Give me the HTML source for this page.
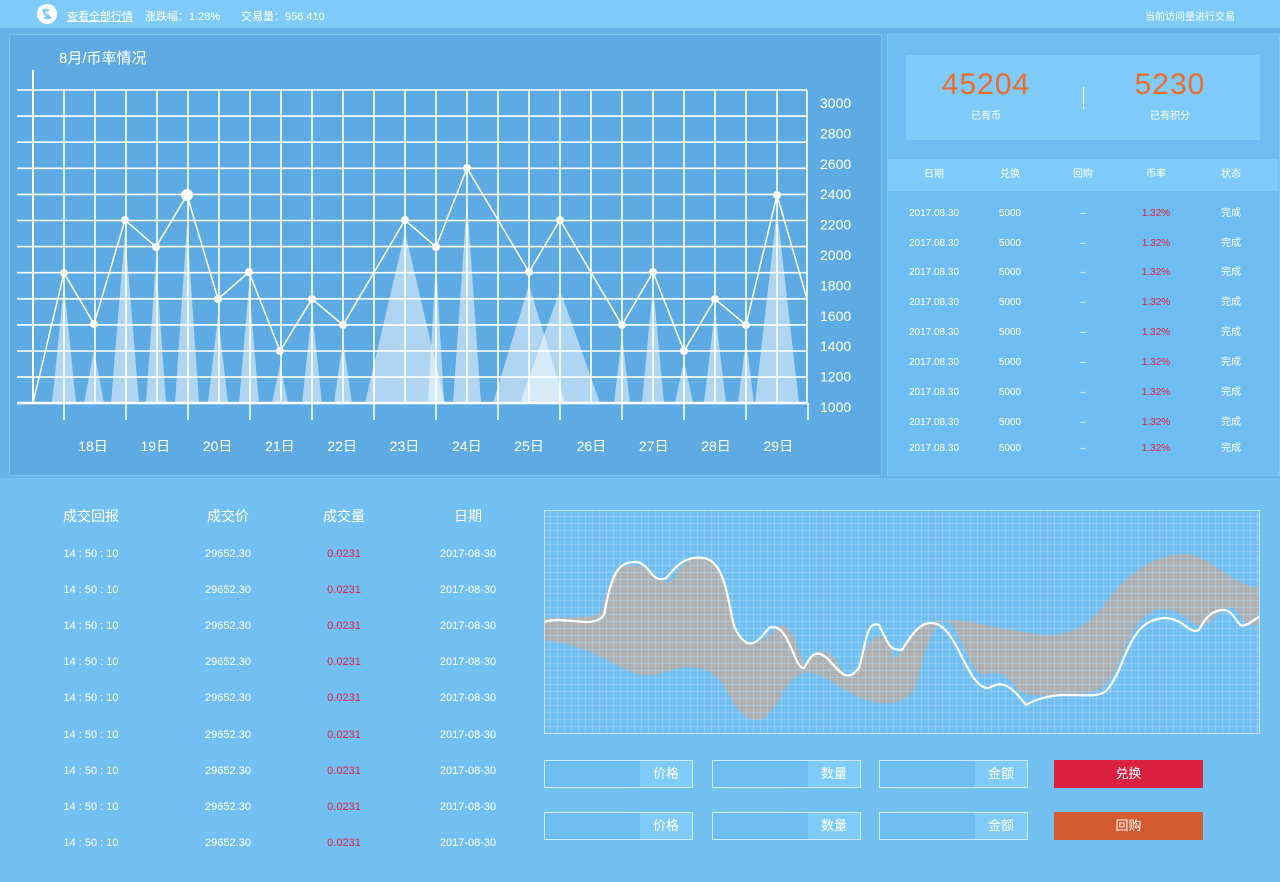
<!DOCTYPE html>
<html><head><meta charset="utf-8"><style>
*{margin:0;padding:0;box-sizing:border-box}
body{width:1280px;height:882px;overflow:hidden;background:#72bff2;font-family:"Liberation Sans","Noto Sans CJK SC",sans-serif;color:#fff;position:relative}
.abs{position:absolute}
.top{left:0;top:0;width:1280px;height:28px;background:#7ecbf9;font-size:11px}
.t{position:absolute;white-space:nowrap}
.c{transform:translateX(-50%)}
.r{line-height:12px;height:12px}
</style></head><body>
<div class="abs top">
 <svg class="t" style="left:37px;top:4px" width="20" height="20" viewBox="0 0 20 20"><circle cx="10" cy="10" r="10" fill="#fff"/><path d="M5 6 Q10 3 14 7 Q10 6 8 9 Q12 10 15 14 Q10 17 6 14 Q9 13 9 12 Q6 11 5 6Z" fill="#7ecbf9"/></svg>
 <span class="t" style="left:67px;top:8px;text-decoration:underline">查看全部行情</span>
 <span class="t" style="left:145px;top:8px">涨跌幅：1.28%</span>
 <span class="t" style="left:241px;top:8px">交易量：956.410</span>
 <span class="t" style="left:1145px;top:8px;font-size:10px">当前访问量进行交易</span>
</div>
<div class="abs" style="left:0;top:28px;width:1280px;height:450px;background:#66b3ea"></div>
<div class="abs" style="left:9px;top:34px;width:873px;height:442px;background:#5eaae3;border:1px solid #7dc0ee"></div>
<div class="abs" style="left:887px;top:34px;width:393px;height:442px;background:#6ebdf2;border:1px solid #80c6f3"></div>
<span class="t" style="left:59px;top:47px;font-size:15px">8月/币率情况</span>
<svg class="abs" style="left:0;top:0" width="882" height="480" id="main"></svg>
<div class="abs" style="left:906px;top:55px;width:354px;height:85px;background:#7ecbf9"></div>
<span class="t c" style="left:986px;top:68px;font-size:30px;color:#f06a2a;letter-spacing:1px">45204</span>
<span class="t c" style="left:986px;top:107px;font-size:10px">已有币</span>
<div class="abs" style="left:1083px;top:87px;width:1px;height:22px;background:#fff"></div>
<span class="t c" style="left:1170px;top:68px;font-size:30px;color:#f06a2a;letter-spacing:1px">5230</span>
<span class="t c" style="left:1170px;top:107px;font-size:10px">已有积分</span>
<div class="abs" style="left:888px;top:159px;width:390px;height:32px;background:#7ecbf9"></div>
<div id="rt"></div>
<div id="lt"></div>
<svg class="abs" style="left:544px;top:510px" width="716" height="224" id="wave"></svg>
<div id="form"></div>
<script>
var s='';
var xs=[];for(var i=0;i<26;i++)xs.push(33+i*31);xs[25]=807;
for(var i=0;i<13;i++){var y=90+i*26.1;s+='<line x1="17" y1="'+y+'" x2="807" y2="'+y+'" stroke="#fff" stroke-width="1.6"/>';}
for(var i=1;i<26;i++)s+='<line x1="'+xs[i]+'" y1="90" x2="'+xs[i]+'" y2="403" stroke="#fff" stroke-width="1.6"/>';
s+='<line x1="33" y1="70" x2="33" y2="404" stroke="#fff" stroke-width="2"/><line x1="17" y1="403" x2="807" y2="403" stroke="#fff" stroke-width="2.5"/>';
for(var i=0;i<13;i++){var x=64+i*62;s+='<line x1="'+x+'" y1="403" x2="'+x+'" y2="420" stroke="#fff" stroke-width="1.5"/>';}
var tri=[[64,285,12],[94,350,10],[125,232,14],[156,260,10],[187,225,12],[218,315,10],[249,285,10],[280,365,8],[312,310,10],[343,340,9],[405,232,40],[436,260,8],[467,200,14],[529,285,36],[560,290,40],[622,335,8],[653,285,11],[684,360,9],[715,310,11],[746,340,8],[777,210,22]];
tri.forEach(function(t){s+='<polygon points="'+(t[0]-t[2])+',403 '+t[0]+','+t[1]+' '+(t[0]+t[2])+',403" fill="#fff" fill-opacity="0.5"/>';});
var pts=[[33,403],[64,273],[94,324],[125,220],[156,247],[187,195],[218,299],[249,272],[280,351],[312,299],[343,325],[405,220],[436,247],[467,168],[529,272],[560,220],[622,325],[653,272],[684,351],[715,299],[746,325],[777,195],[807,299]];
s+='<polyline fill="none" stroke="#fff" stroke-width="1.5" points="'+pts.map(function(p){return p.join(',')}).join(' ')+'"/>';
pts.slice(1).forEach(function(p){var r=(p[0]==187)?6:(p[0]==807?0:4);s+='<circle cx="'+p[0]+'" cy="'+p[1]+'" r="'+r+'" fill="#fff"/>';});
var yl=[3000,2800,2600,2400,2200,2000,1800,1600,1400,1200,1000];
yl.forEach(function(v,i){s+='<text x="820" y="'+(108+i*30.4)+'" fill="#fff" font-size="14" font-family="Liberation Sans">'+v+'</text>';});
for(var d=18;d<=29;d++){var x=93+(d-18)*62.3;s+='<text x="'+x+'" y="451" fill="#fff" font-size="14" text-anchor="middle" font-family="Liberation Sans,Noto Sans CJK SC">'+d+'日</text>';}
document.getElementById('main').innerHTML=s;
var h='',hx=[934,1010,1083,1156,1231],hd=['日期','兑换','回购','币率','状态'];
hd.forEach(function(t,i){h+='<span class="t c r" style="left:'+hx[i]+'px;top:169px;font-size:10px">'+t+'</span>';});
[214,244,273,303,333,363,393,423,449].forEach(function(y){var v=['2017.08.30','5000','–','1.32%','完成'];v.forEach(function(t,i){h+='<span class="t c r" style="left:'+hx[i]+'px;top:'+(y-6)+'px;font-size:10px;'+(i==3?'color:#e0213f':'')+'">'+t+'</span>';});});
document.getElementById('rt').innerHTML=h;
h='';var lx=[91,228,344,468];['成交回报','成交价','成交量','日期'].forEach(function(t,i){h+='<span class="t c" style="left:'+lx[i]+'px;top:507px;font-size:14px;line-height:18px">'+t+'</span>';});
for(var r=0;r<9;r++){var y=548+r*36.1;['14 : 50 : 10','29652.30','0.0231','2017-08-30'].forEach(function(t,i){h+='<span class="t c" style="left:'+lx[i]+'px;top:'+y+'px;font-size:11px;line-height:13px;'+(i==2?'color:#e0213f':'')+'">'+t+'</span>';});}
document.getElementById('lt').innerHTML=h;
var w='<defs><pattern id="g" width="7" height="7" patternUnits="userSpaceOnUse"><path d="M7 0V7H0" fill="none" stroke="#a9d7f7" stroke-width="1"/></pattern></defs>';
w+='<rect width="716" height="224" fill="#72bff2"/>';
var band='M0 108 C30 106 50 110 58 100 C66 60 80 52 96 56 C110 62 116 80 130 68 C140 50 150 45 165 50 C185 55 185 110 192 120 C205 145 220 130 235 116 C250 110 255 150 262 155 C270 140 280 135 292 150 C300 165 305 170 315 158 C322 130 335 115 345 136 C350 135 345 160 358 140 C370 120 385 110 400 110 C420 108 450 118 480 122 C520 130 540 120 560 95 C590 55 620 40 650 45 C675 55 690 75 716 78 L716 113 C705 120 700 112 692 100 C680 90 668 115 660 115 C650 120 640 100 625 100 C600 95 590 120 580 140 C565 180 555 183 530 184 C500 184 480 190 470 175 C462 165 455 160 440 165 C425 165 415 110 400 110 C390 115 380 140 375 165 C370 195 345 195 330 192 C300 185 280 160 260 163 C240 165 235 205 215 210 C190 212 185 175 170 165 C150 150 130 160 110 165 C85 168 70 150 40 140 C20 132 10 132 0 130Z';
w+='<path d="'+band+'" fill="#b0b0b0"/>';
w+='<rect width="716" height="224" fill="url(#g)"/>';
var line='M0 112 C20 105 50 120 60 105 C68 60 75 52 92 52 C105 52 108 75 122 68 C130 60 138 45 160 48 C185 52 185 110 192 120 C205 145 215 130 225 118 C245 110 250 160 260 158 C265 150 270 135 285 150 C300 168 305 170 315 158 C322 135 322 110 335 115 C345 135 345 140 358 140 C370 120 380 108 395 115 C415 125 425 180 445 178 C460 168 470 180 482 195 C490 190 505 185 520 185 C560 185 560 190 575 160 C590 120 600 110 620 108 C640 108 645 125 655 120 C665 100 675 100 680 100 C690 100 695 120 700 115 C705 116 710 108 716 107';
w+='<path d="'+line+'" fill="none" stroke="#fff" stroke-width="2.2"/>';
w+='<rect x="0.5" y="0.5" width="715" height="223" fill="none" stroke="#bfe2fa"/>';
document.getElementById('wave').innerHTML=w;
h='';var fx=[544,712,879],lb=['价格','数量','金额'];
[760,812].forEach(function(y,r){fx.forEach(function(x,i){h+='<div class="abs" style="left:'+x+'px;top:'+y+'px;width:149px;height:28px;border:1px solid #cfeafc;background:#6ebdf2"><div class="abs" style="right:0;top:0;width:52px;height:26px;background:#7ecbf9;text-align:center;font-size:13px;line-height:26px">'+lb[i]+'</div></div>';});
h+='<div class="abs" style="left:1054px;top:'+y+'px;width:149px;height:28px;background:'+(r?'#d45a30':'#dc2041')+';text-align:center;font-size:13px;line-height:28px">'+(r?'回购':'兑换')+'</div>';});
document.getElementById('form').innerHTML=h;
</script>
</body></html>
